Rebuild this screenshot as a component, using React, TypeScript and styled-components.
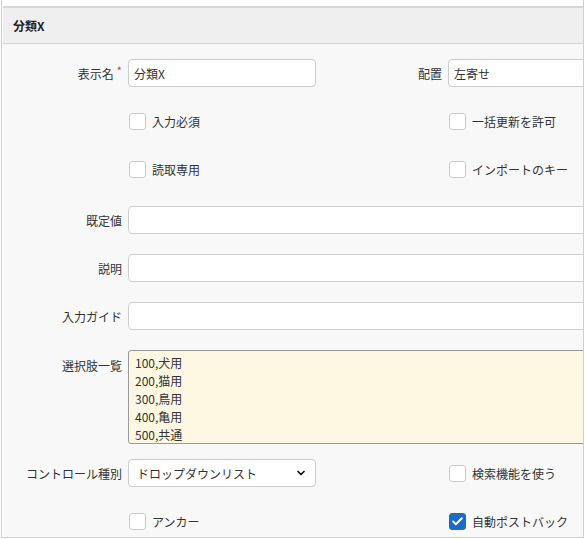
import React from "react";
import styled, { createGlobalStyle } from "styled-components";
import { ChevronDown, Check } from "lucide-react";

const GlobalStyle = createGlobalStyle`
  html, body {
    margin: 0;
    padding: 0;
    background: #ffffff;
  }
  body {
    font-family: "Noto Sans CJK JP", "Noto Sans", sans-serif;
    font-size: 12px;
    color: #333333;
  }
`;

const Frame = styled.div`
  box-sizing: border-box;
  width: 583px;
  height: 538px;
  margin-left: 1px;
  padding-top: 6px;
  border-left: 1px solid #cfcfcf;
  border-right: 1px solid #cfcfcf;
  border-bottom: 1px solid #cfcfcf;
  overflow: hidden;
  display: flex;
  flex-direction: column;
  background: #ffffff;
`;

const Header = styled.div`
  display: flex;
  align-items: center;
  height: 35px;
  padding-left: 10px;
  margin-left: 1px;
  background: #efefef;
  border-top: 2px solid #d8d8d8;
  border-bottom: 1px solid #d4d4d4;
  font-weight: 700;
  font-size: 12px;
  color: #222;
`;

const Body = styled.div`
  flex: 1;
  margin-left: 1px;
  background: #f8f8f8;
  padding-top: 15px;
  display: grid;
  grid-template-columns: 119px 188px 120px 188px;
  column-gap: 6px;
  grid-auto-rows: min-content;
`;

const Row = styled.div<{ $mt?: number }>`
  display: contents;
`;

const Label = styled.div<{ $top?: boolean; $mt?: number }>`
  display: flex;
  justify-content: flex-end;
  align-items: ${(p) => (p.$top ? "flex-start" : "center")};
  padding-top: ${(p) => (p.$top ? "7px" : "0")};
  margin-top: ${(p) => p.$mt ?? 0}px;
  height: ${(p) => (p.$top ? "auto" : "28px")};
  white-space: nowrap;
  color: #333;
`;

const Required = styled.span`
  color: #e8261b;
  font-size: 11px;
  margin-left: 3px;
  position: relative;
  top: -3px;
`;

const Cell = styled.div<{ $wide?: boolean; $mt?: number }>`
  grid-column: ${(p) => (p.$wide ? "2 / span 3" : "auto")};
  margin-top: ${(p) => p.$mt ?? 0}px;
  display: flex;
  align-items: center;
  min-height: 28px;
`;

const TextInput = styled.input`
  box-sizing: border-box;
  width: 100%;
  height: 28px;
  padding: 0 5px;
  border: 1px solid #cccccc;
  border-radius: 4px;
  background: #ffffff;
  font-family: inherit;
  font-size: 12px;
  color: #333;
  outline: none;
`;

const TextArea = styled.textarea`
  box-sizing: border-box;
  width: 100%;
  height: 94px;
  padding: 3px 6px;
  border: 1px solid #999999;
  border-radius: 3px;
  background: #fef8e2;
  font-family: inherit;
  font-size: 12px;
  line-height: 18px;
  color: #333;
  resize: none;
  overflow: hidden;
  outline: none;
`;

const SelectWrap = styled.div`
  position: relative;
  width: 100%;
`;

const Select = styled.select`
  box-sizing: border-box;
  width: 100%;
  height: 28px;
  padding: 0 8px;
  border: 1px solid #cccccc;
  border-radius: 4px;
  background: #ffffff;
  font-family: inherit;
  font-size: 12px;
  color: #333;
  appearance: none;
  outline: none;
`;

const Chevron = styled.span`
  position: absolute;
  right: 9px;
  top: 8px;
  display: flex;
  color: #111;
  pointer-events: none;
`;

const CheckLabel = styled.label`
  display: flex;
  align-items: center;
  gap: 6px;
  color: #333;
  white-space: nowrap;
`;

const Box = styled.span<{ $checked?: boolean }>`
  box-sizing: border-box;
  width: 17px;
  height: 17px;
  margin-left: 1px;
  border-radius: 3px;
  border: 1px solid ${(p) => (p.$checked ? "#1a6cc4" : "#c9c9c9")};
  background: ${(p) => (p.$checked ? "#1a6cc4" : "#ffffff")};
  display: flex;
  align-items: center;
  justify-content: center;
  color: #fff;
`;

const Empty = styled.div``;

const CheckField: React.FC<{ label: string; checked?: boolean }> = ({ label, checked }) => (
  <CheckLabel>
    <Box $checked={checked}>{checked && <Check size={13} strokeWidth={3.5} />}</Box>
    {label}
  </CheckLabel>
);

const choices = "100,犬用\n200,猫用\n300,鳥用\n400,亀用\n500,共通";

export default function App() {
  return (
    <>
      <GlobalStyle />
      <Frame>
        <Header>分類X</Header>
        <Body>
          <Row>
            <Label>
              表示名<Required>*</Required>
            </Label>
            <Cell>
              <TextInput defaultValue="分類X" />
            </Cell>
            <Label>配置</Label>
            <Cell>
              <TextInput defaultValue="左寄せ" />
            </Cell>
          </Row>

          <Row>
            <Empty />
            <Cell $mt={20}>
              <CheckField label="入力必須" />
            </Cell>
            <Empty />
            <Cell $mt={20}>
              <CheckField label="一括更新を許可" />
            </Cell>
          </Row>

          <Row>
            <Empty />
            <Cell $mt={20}>
              <CheckField label="読取専用" />
            </Cell>
            <Empty />
            <Cell $mt={20}>
              <CheckField label="インポートのキー" />
            </Cell>
          </Row>

          <Row>
            <Label $mt={23}>既定値</Label>
            <Cell $wide $mt={23}>
              <TextInput />
            </Cell>
          </Row>

          <Row>
            <Label $mt={20}>説明</Label>
            <Cell $wide $mt={20}>
              <TextInput />
            </Cell>
          </Row>

          <Row>
            <Label $mt={20}>入力ガイド</Label>
            <Cell $wide $mt={20}>
              <TextInput />
            </Cell>
          </Row>

          <Row>
            <Label $top $mt={20}>選択肢一覧</Label>
            <Cell $wide $mt={20}>
              <TextArea defaultValue={choices} />
            </Cell>
          </Row>

          <Row>
            <Label $mt={15}>コントロール種別</Label>
            <Cell $mt={15}>
              <SelectWrap>
                <Select defaultValue="dropdown">
                  <option value="dropdown">ドロップダウンリスト</option>
                </Select>
                <Chevron>
                  <ChevronDown size={12} strokeWidth={3.5} />
                </Chevron>
              </SelectWrap>
            </Cell>
            <Empty />
            <Cell $mt={15}>
              <CheckField label="検索機能を使う" />
            </Cell>
          </Row>

          <Row>
            <Empty />
            <Cell $mt={20}>
              <CheckField label="アンカー" />
            </Cell>
            <Empty />
            <Cell $mt={20}>
              <CheckField label="自動ポストバック" checked />
            </Cell>
          </Row>
        </Body>
      </Frame>
    </>
  );
}
